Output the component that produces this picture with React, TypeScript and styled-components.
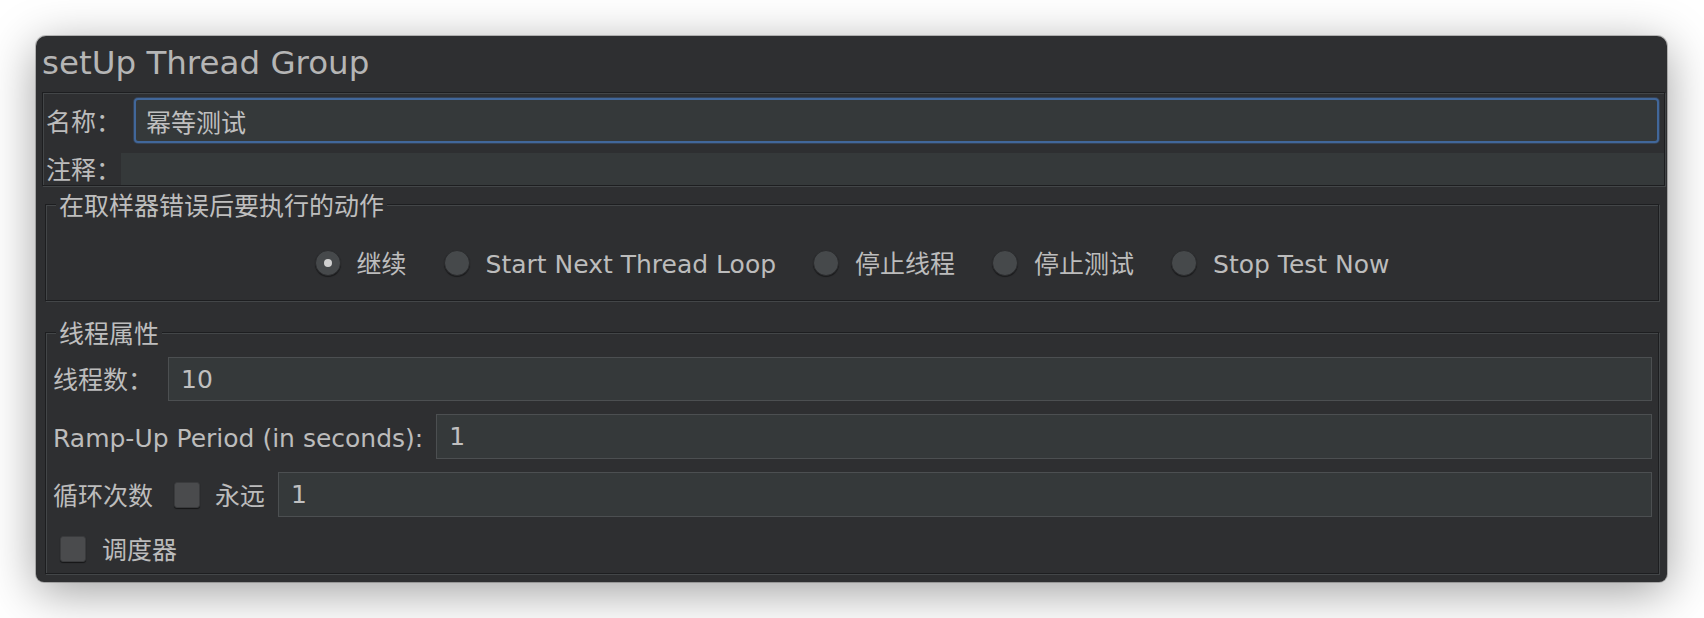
import React from 'react'
import styled, { createGlobalStyle } from 'styled-components'

const GlobalStyle = createGlobalStyle`
  html, body {
    margin: 0;
    padding: 0;
    background: #ffffff;
  }
  body {
    font-family: "DejaVu Sans", "Noto Sans CJK SC", sans-serif;
  }
`

const DARK = '#1d1e20'
const LIGHT = '#434648'
const BG = '#2e2f31'

const Page = styled.div`
  width: 1704px;
  height: 618px;
  padding: 36px 0 0 36px;
  box-sizing: border-box;
  overflow: hidden;
`

const Window = styled.div`
  width: 1631px;
  height: 546px;
  box-sizing: border-box;
  background: ${BG};
  border-radius: 10px 10px 8px 8px;
  box-shadow: 0 10px 48px rgba(0, 0, 0, 0.38), 0 0 0 1px rgba(0, 0, 0, 0.22);
  padding: 0 2px 0 6px;
  color: #bcbcbc;
  font-size: 25px;
  display: flex;
  flex-direction: column;
`

const Title = styled.h1`
  margin: 0 0 3px 0;
  padding-top: 2px;
  font-weight: normal;
  font-size: 32.5px;
  line-height: 51px;
  color: #b5b5b5;
  white-space: nowrap;
`

const NamePanel = styled.div`
  display: flex;
  flex-direction: column;
  gap: 10px;
  padding: 5px 0 0 3px;
  border: 1px solid ${DARK};
  box-shadow: inset 1px 1px 0 ${LIGHT}, 1px 1px 0 ${LIGHT};
`

const Row = styled.div<{ $gap?: number }>`
  display: flex;
  align-items: center;
  gap: ${p => p.$gap ?? 0}px;
`

// text sits a little low in its box, as in the Swing labels
const Label = styled.span`
  white-space: nowrap;
  line-height: 26px;
  padding-top: 4px;
`

const Field = styled.div<{ $h?: number; $focus?: boolean; $flat?: boolean }>`
  flex: 1;
  height: ${p => p.$h ?? 45}px;
  box-sizing: border-box;
  display: flex;
  align-items: center;
  padding-left: ${p => (p.$focus ? 10 : 12)}px;
  background: #35393a;
  color: #c0c0c0;
  white-space: nowrap;
  border: ${p =>
    p.$focus ? '2px solid #41679a' : p.$flat ? 'none' : '1px solid #4c4f51'};
  border-radius: ${p => (p.$focus ? 4 : 0)}px;
  box-shadow: ${p => (p.$focus ? '0 0 0 1px rgba(65, 103, 154, 0.35)' : 'none')};
  margin-right: ${p => (p.$focus ? 5 : 0)}px;
`

const Group = styled.section<{ $top: number }>`
  display: flex;
  flex-direction: column;
  margin: ${p => p.$top}px 6px 0 3px;
  border: 1px solid ${DARK};
  box-shadow: inset 1px 1px 0 ${LIGHT}, 1px 1px 0 ${LIGHT};
`

const GroupTitle = styled.div`
  align-self: flex-start;
  margin: -13px 0 0 10px;
  padding: 0 3px;
  line-height: 30px;
  background: ${BG};
  color: #bebebe;
  white-space: nowrap;
`

const RadioRow = styled.div`
  display: flex;
  justify-content: center;
  align-items: center;
  gap: 37px;
  margin: 28px 0 24px;
`

const Option = styled.label`
  display: flex;
  align-items: center;
  gap: 16px;
  white-space: nowrap;
`

const OptionText = styled.span`
  line-height: 23px;
  padding-top: 3px;
`

const Radio = styled.span<{ $on?: boolean }>`
  width: 26px;
  height: 26px;
  box-sizing: border-box;
  border-radius: 50%;
  background: #46494b;
  border: 1px solid #2b2c2e;
  box-shadow: 0 1px 1px rgba(0, 0, 0, 0.45);
  display: flex;
  align-items: center;
  justify-content: center;

  &::after {
    content: '';
    display: ${p => (p.$on ? 'block' : 'none')};
    width: 8px;
    height: 8px;
    border-radius: 50%;
    background: #d0d0d0;
  }
`

const Props = styled.div`
  display: flex;
  flex-direction: column;
  gap: 13px;
  padding: 7px 6px 11px 7px;
`

const Check = styled.span`
  width: 26px;
  height: 26px;
  flex: none;
  box-sizing: border-box;
  border-radius: 3px;
  background: #4a4b4d;
  border: 1px solid #3a3b3d;
  box-shadow: 0 1px 1px rgba(0, 0, 0, 0.55);
`

const SchedRow = styled.div`
  display: flex;
  align-items: center;
  gap: 16px;
  margin: 6px 0 0 7px;
`

const options = [
  { text: '继续', on: true },
  { text: 'Start Next Thread Loop' },
  { text: '停止线程' },
  { text: '停止测试' },
  { text: 'Stop Test Now' },
]

export default function App() {
  return (
    <Page>
      <GlobalStyle />
      <Window>
        <Title>setUp Thread Group</Title>
        <NamePanel>
          <Row $gap={13}>
            <Label>名称：</Label>
            <Field $focus>幂等测试</Field>
          </Row>
          <Row>
            <Label>注释：</Label>
            <Field $h={32} $flat />
          </Row>
        </NamePanel>

        <Group $top={18}>
          <GroupTitle>在取样器错误后要执行的动作</GroupTitle>
          <RadioRow>
            {options.map(o => (
              <Option key={o.text}>
                <Radio $on={o.on} />
                <OptionText>{o.text}</OptionText>
              </Option>
            ))}
          </RadioRow>
        </Group>

        <Group $top={31}>
          <GroupTitle>线程属性</GroupTitle>
          <Props>
            <Row $gap={15}>
              <Label>线程数：</Label>
              <Field $h={44}>10</Field>
            </Row>
            <Row $gap={13}>
              <Label>Ramp-Up Period (in seconds):</Label>
              <Field>1</Field>
            </Row>
            <Row>
              <Label>循环次数</Label>
              <Check style={{ margin: '0 15px 0 21px' }} />
              <Label>永远</Label>
              <Field style={{ marginLeft: 13 }}>1</Field>
            </Row>
            <SchedRow>
              <Check />
              <OptionText>调度器</OptionText>
            </SchedRow>
          </Props>
        </Group>
      </Window>
    </Page>
  )
}
